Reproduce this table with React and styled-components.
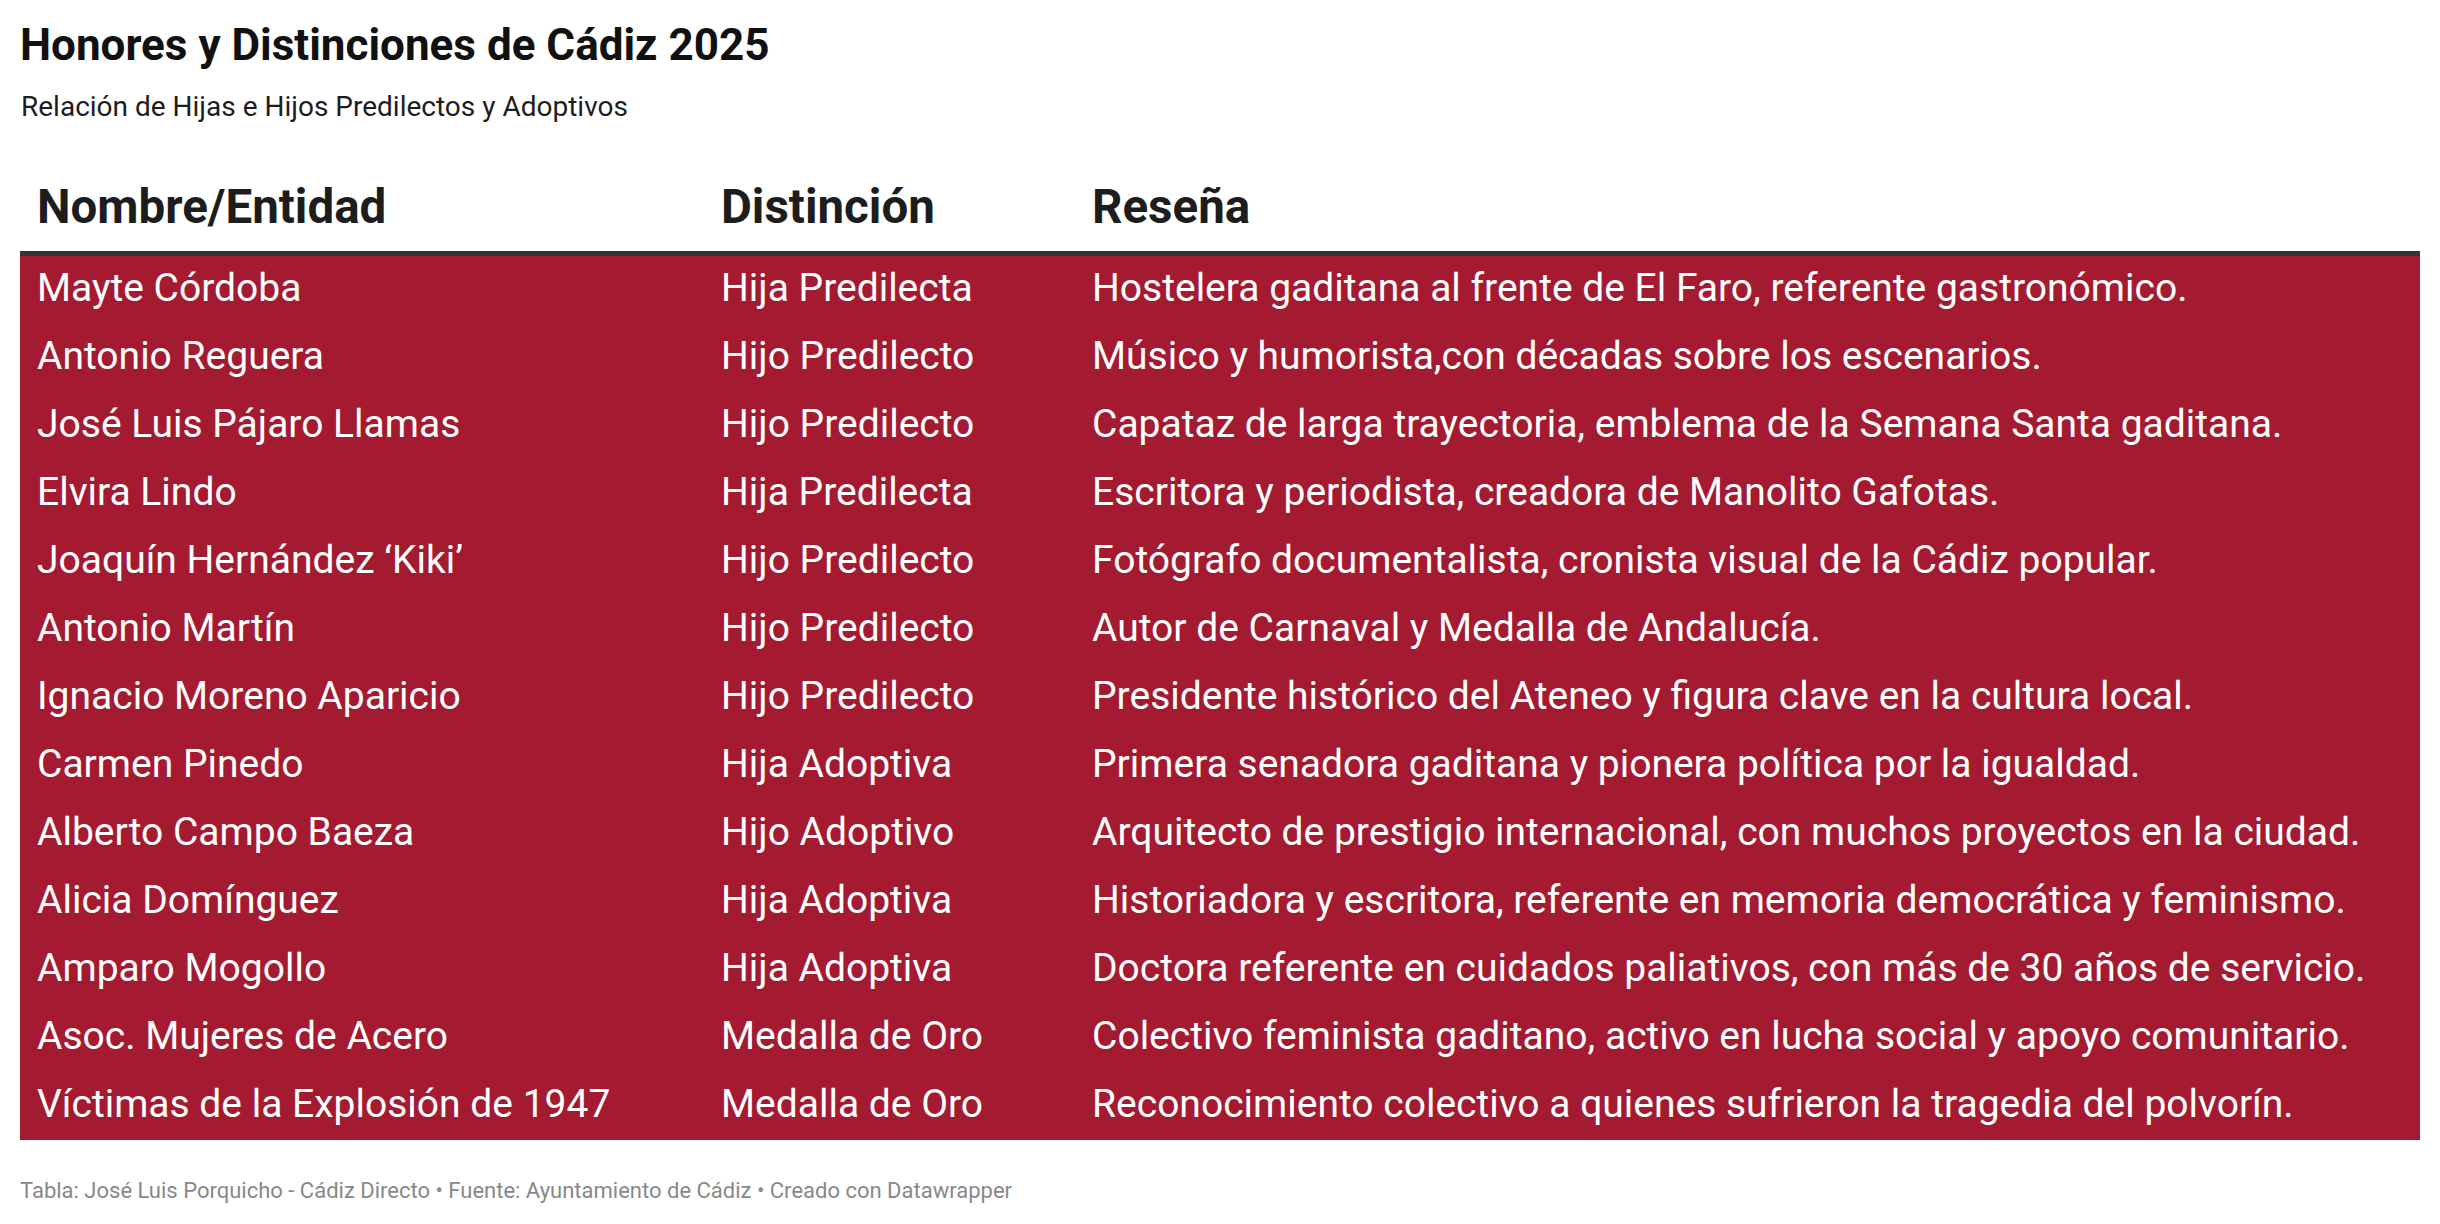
import React from 'react'
import styled, { createGlobalStyle } from 'styled-components'

const rows = [
    ['Mayte Córdoba', 'Hija Predilecta', 'Hostelera gaditana al frente de El Faro, referente gastronómico.'],
    ['Antonio Reguera', 'Hijo Predilecto', 'Músico y humorista,con décadas sobre los escenarios.'],
    ['José Luis Pájaro Llamas', 'Hijo Predilecto', 'Capataz de larga trayectoria, emblema de la Semana Santa gaditana.'],
    ['Elvira Lindo', 'Hija Predilecta', 'Escritora y periodista, creadora de Manolito Gafotas.'],
    ['Joaquín Hernández ‘Kiki’', 'Hijo Predilecto', 'Fotógrafo documentalista, cronista visual de la Cádiz popular.'],
    ['Antonio Martín', 'Hijo Predilecto', 'Autor de Carnaval y Medalla de Andalucía.'],
    ['Ignacio Moreno Aparicio', 'Hijo Predilecto', 'Presidente histórico del Ateneo y figura clave en la cultura local.'],
    ['Carmen Pinedo', 'Hija Adoptiva', 'Primera senadora gaditana y pionera política por la igualdad.'],
    ['Alberto Campo Baeza', 'Hijo Adoptivo', 'Arquitecto de prestigio internacional, con muchos proyectos en la ciudad.'],
    ['Alicia Domínguez', 'Hija Adoptiva', 'Historiadora y escritora, referente en memoria democrática y feminismo.'],
    ['Amparo Mogollo', 'Hija Adoptiva', 'Doctora referente en cuidados paliativos, con más de 30 años de servicio.'],
    ['Asoc. Mujeres de Acero', 'Medalla de Oro', 'Colectivo feminista gaditano, activo en lucha social y apoyo comunitario.'],
    ['Víctimas de la Explosión de 1947', 'Medalla de Oro', 'Reconocimiento colectivo a quienes sufrieron la tragedia del polvorín.'],
]

const App = () => {
    return (
        <>
            <GlobalStyle />
            <Chart>
                <Title>Honores y Distinciones de Cádiz 2025</Title>
                <Subtitle>Relación de Hijas e Hijos Predilectos y Adoptivos</Subtitle>
                <Table>
                    <colgroup>
                        <col style={{ width: '684px' }} />
                        <col style={{ width: '371px' }} />
                        <col />
                    </colgroup>
                    <thead>
                        <tr>
                            <HeadCell>Nombre/Entidad</HeadCell>
                            <HeadCell>Distinción</HeadCell>
                            <HeadCell>Reseña</HeadCell>
                        </tr>
                    </thead>
                    <tbody>
                        {rows.map((r) => (
                            <Row key={r[0]}>
                                <Cell>{r[0]}</Cell>
                                <Cell>{r[1]}</Cell>
                                <Cell>{r[2]}</Cell>
                            </Row>
                        ))}
                    </tbody>
                </Table>
                <Footer>
                    Tabla: José Luis Porquicho - Cádiz Directo • Fuente: Ayuntamiento de Cádiz • Creado con Datawrapper
                </Footer>
            </Chart>
        </>
    )
}

const GlobalStyle = createGlobalStyle`
    body {
        margin: 0;
        background: #fff;
        font-family: Roboto, "Liberation Sans", sans-serif;
    }
`

const Chart = styled.div`
    padding: 19px 20px 0 20px;
`

const Title = styled.h1`
    margin: 0;
    font-size: 44px;
    line-height: 1.2;
    font-weight: 700;
    color: #111;
`

const Subtitle = styled.p`
    margin: 17px 0 0 1px;
    font-size: 28px;
    line-height: 1.3;
    color: #1d1d1d;
`

const Table = styled.table`
    margin-top: 54px;
    width: 100%;
    border-collapse: collapse;
    table-layout: fixed;
`

const HeadCell = styled.th`
    text-align: left;
    padding: 0 17px 15px 17px;
    font-size: 47.5px;
    line-height: 1.2;
    font-weight: 700;
    color: #1d1d1d;
    border-bottom: 5px solid #363236;
`

const Row = styled.tr`
    background: #a41b31;
    height: 68px;
`

const Cell = styled.td`
    padding: 0 17px 4px 17px;
    font-size: 39px;
    line-height: 64px;
    color: #fff;
    white-space: nowrap;
`

const Footer = styled.p`
    margin: 37px 0 0 0;
    font-size: 22px;
    line-height: 1.3;
    color: #888;
`

export default App
